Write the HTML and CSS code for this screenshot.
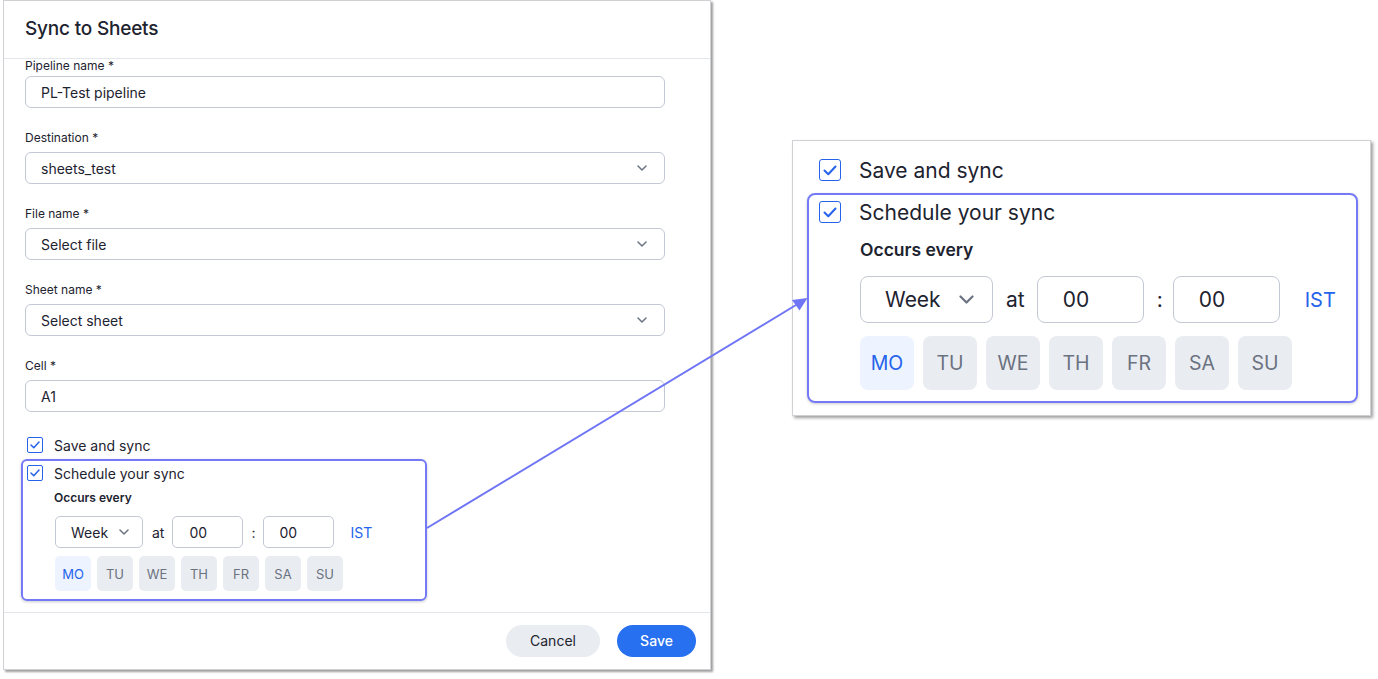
FILE: index.html
```html
<!DOCTYPE html>
<html lang="en">
<head>
<meta charset="utf-8">
<title>Sync to Sheets</title>
<link rel="stylesheet" href="styles.css">
</head>
<body>
<div class="page">
  <div class="dialog">
    <div class="dlg-header"><h1 class="dlg-title">Sync to Sheets</h1></div>
    <div class="dlg-body">
      <div class="fields">
        <div class="field field-first">
          <label class="field-label">Pipeline name *</label>
          <div class="input"><span>PL-Test pipeline</span></div>
        </div>
        <div class="field">
          <label class="field-label">Destination *</label>
          <div class="input select"><span>sheets_test</span><svg class="chev" width="10" height="6" viewBox="0 0 10 6"><path d="M1 1l4 4 4-4" fill="none" stroke="#6b7280" stroke-width="1.5" stroke-linecap="round" stroke-linejoin="round"/></svg></div>
        </div>
        <div class="field">
          <label class="field-label">File name *</label>
          <div class="input select"><span>Select file</span><svg class="chev" width="10" height="6" viewBox="0 0 10 6"><path d="M1 1l4 4 4-4" fill="none" stroke="#6b7280" stroke-width="1.5" stroke-linecap="round" stroke-linejoin="round"/></svg></div>
        </div>
        <div class="field">
          <label class="field-label">Sheet name *</label>
          <div class="input select"><span>Select sheet</span><svg class="chev" width="10" height="6" viewBox="0 0 10 6"><path d="M1 1l4 4 4-4" fill="none" stroke="#6b7280" stroke-width="1.5" stroke-linecap="round" stroke-linejoin="round"/></svg></div>
        </div>
        <div class="field">
          <label class="field-label">Cell *</label>
          <div class="input"><span>A1</span></div>
        </div>
      </div>

      <div class="check-row sm save-row">
        <span class="cbox"><svg width="10" height="8" viewBox="0 0 10 8"><path d="M1 4l2.8 2.8L9 1" fill="none" stroke="#2563eb" stroke-width="1.5" stroke-linecap="round" stroke-linejoin="round"/></svg></span>
        <span class="check-label">Save and sync</span>
      </div>

      <div class="sched sm">
        <div class="check-row">
          <span class="cbox"><svg width="10" height="8" viewBox="0 0 10 8"><path d="M1 4l2.8 2.8L9 1" fill="none" stroke="#2563eb" stroke-width="1.5" stroke-linecap="round" stroke-linejoin="round"/></svg></span>
          <span class="check-label">Schedule your sync</span>
        </div>
        <div class="occurs">Occurs every</div>
        <div class="controls">
          <div class="box week"><span>Week</span><svg class="chev" width="10" height="6" viewBox="0 0 10 6"><path d="M1 1l4 4 4-4" fill="none" stroke="#6b7280" stroke-width="1.5" stroke-linecap="round" stroke-linejoin="round"/></svg></div>
          <span class="at">at</span>
          <div class="box time"><span>00</span></div>
          <span class="colon">:</span>
          <div class="box time"><span>00</span></div>
          <span class="tz">IST</span>
        </div>
        <div class="days">
          <span class="day on">MO</span><span class="day">TU</span><span class="day">WE</span><span class="day">TH</span><span class="day">FR</span><span class="day">SA</span><span class="day">SU</span>
        </div>
      </div>
    </div>
    <div class="dlg-footer">
      <button class="btn btn-cancel">Cancel</button>
      <button class="btn btn-save">Save</button>
    </div>
  </div>

  <div class="zoom-panel">
    <div class="check-row lg save-row-lg">
      <span class="cbox"><svg width="14" height="11" viewBox="0 0 14 11"><path d="M1.5 5.5l3.8 3.8L12.5 1.5" fill="none" stroke="#2563eb" stroke-width="2" stroke-linecap="round" stroke-linejoin="round"/></svg></span>
      <span class="check-label">Save and sync</span>
    </div>
    <div class="sched lg">
      <div class="check-row">
        <span class="cbox"><svg width="14" height="11" viewBox="0 0 14 11"><path d="M1.5 5.5l3.8 3.8L12.5 1.5" fill="none" stroke="#2563eb" stroke-width="2" stroke-linecap="round" stroke-linejoin="round"/></svg></span>
        <span class="check-label">Schedule your sync</span>
      </div>
      <div class="occurs">Occurs every</div>
      <div class="controls">
        <div class="box week"><span>Week</span><svg class="chev" width="15" height="9" viewBox="0 0 15 9"><path d="M1.5 1.5l6 6 6-6" fill="none" stroke="#6b7280" stroke-width="2.2" stroke-linecap="round" stroke-linejoin="round"/></svg></div>
        <span class="at">at</span>
        <div class="box time"><span>00</span></div>
        <span class="colon">:</span>
        <div class="box time"><span>00</span></div>
        <span class="tz">IST</span>
      </div>
      <div class="days">
        <span class="day on">MO</span><span class="day">TU</span><span class="day">WE</span><span class="day">TH</span><span class="day">FR</span><span class="day">SA</span><span class="day">SU</span>
      </div>
    </div>
  </div>

  <svg class="arrow" width="1378" height="679" viewBox="0 0 1378 679">
    <line x1="427" y1="528" x2="796" y2="305" stroke="#6f75f5" stroke-width="2"/>
    <polygon points="807.5,298 799.5,310.5 792,300" fill="#6f75f5"/>
  </svg>
</div>
</body>
</html>
```

FILE: styles.css
```css
* { box-sizing: border-box; }
html, body { margin: 0; padding: 0; background: #fff; }
body {
  font-family: Inter, "Noto Sans", "Liberation Sans", sans-serif;
  color: #1d232f;
  width: 1378px;
  height: 679px;
  overflow: hidden;
}
.page {
  position: relative;
  display: flex;
  align-items: flex-start;
  padding-left: 3px;
  width: 1378px;
  height: 679px;
}

/* dialog */
.dialog {
  width: 708px;
  height: 670px;
  border: 1px solid #cfd1d4;
  background: #fff;
  box-shadow: 2px 2px 2px rgba(0,0,0,0.38);
  display: flex;
  flex-direction: column;
}
.dlg-header {
  height: 58px;
  border-bottom: 1px solid #e3e6ea;
  padding-left: 21px;
  display: flex;
  align-items: center;
  flex: none;
}
.dlg-title {
  margin: 0;
  font-size: 19px;
  font-weight: 500;
  letter-spacing: -0.2px;
  color: #1d232f;
  padding-bottom: 2px;
}
.dlg-body {
  flex: 1;
  overflow: hidden;
  padding: 0 45px 0 21px;
  display: flex;
  flex-direction: column;
}
.fields {
  display: flex;
  flex-direction: column;
  gap: 22px;
}
.field { display: flex; flex-direction: column; }
.field-first .field-label { line-height: 12px; margin-top: 1px; margin-bottom: 4px; }
.field-label {
  font-size: 12px;
  line-height: 16px;
  margin-bottom: 6px;
  color: #1d232f;
}
.input {
  height: 32px;
  border: 1px solid #c3c8d4;
  border-radius: 6px;
  padding: 0 16px 0 15px;
  display: flex;
  align-items: center;
  justify-content: space-between;
  font-size: 14px;
  color: #1d232f;
}
.chev { flex: none; }
.input .chev { margin-right: 1px; }

/* checkboxes */
.check-row { display: flex; align-items: center; }
.cbox {
  flex: none;
  display: flex;
  align-items: center;
  justify-content: center;
  border: 1px solid #2563eb;
  background: #fff;
}
.sm .cbox { width: 16px; height: 16px; border-radius: 2px; }
.sm .check-row, .check-row.sm { height: 20px; }
.sm .check-label { margin-left: 11px; font-size: 14px; }
.save-row { margin-top: 23px; padding-left: 2px; }

/* small schedule box */
.sched {
  border: 2px solid #7479f5;
  box-shadow: 0 1px 3px rgba(0,0,0,0.2);
  display: flex;
  flex-direction: column;
}
.sched.sm {
  margin-top: 4px;
  margin-left: -4px;
  width: 406px;
  border-radius: 6px;
  padding: 2px 0 8px 4px;
}
.sched.sm .occurs {
  margin-top: 7px;
  padding-left: 27px;
  font-size: 12px;
  line-height: 16px;
  font-weight: 600;
}
.controls { display: flex; align-items: center; }
.box {
  border: 1px solid #c3c8d4;
  display: flex;
  align-items: center;
}
.sched.sm .controls { margin-top: 10px; padding-left: 28px; height: 32px; font-size: 14px; }
.sched.sm .box { height: 32px; border-radius: 5px; }
.sched.sm .week { width: 88px; padding-left: 15px; gap: 11px; }
.sched.sm .time { width: 71px; padding-left: 16px; }
.sched.sm .at { margin: 0 8px 0 9px; }
.sched.sm .colon { margin: 0 7px 0 8px; }
.sched.sm .tz { margin-left: 17px; color: #2563eb; }
.days { display: flex; }
.day {
  display: flex;
  align-items: center;
  justify-content: center;
  background: #e9ecf1;
  color: #6b7280;
}
.day.on { background: #eef4ff; color: #2563eb; }
.sched.sm .days { margin-top: 8px; padding-left: 28px; gap: 6px; }
.sched.sm .day { width: 36px; height: 35px; border-radius: 5px; font-size: 13px; }

/* footer */
.dlg-footer {
  flex: none;
  height: 57px;
  border-top: 1px solid #e3e6ea;
  display: flex;
  align-items: center;
  justify-content: flex-end;
  gap: 17px;
  padding-right: 14px;
  padding-bottom: 1px;
}
.btn {
  height: 32px;
  border: none;
  border-radius: 16px;
  font-family: inherit;
  font-size: 14px;
  padding: 0;
}
.btn-cancel { width: 94px; background: #e9ecf1; color: #1d232f; }
.btn-save { width: 79px; background: #2770ef; color: #fff; font-weight: 500; }

/* zoom panel */
.zoom-panel {
  margin-top: 140px;
  margin-left: 81px;
  width: 579px;
  height: 276px;
  border: 1px solid #cfd1d4;
  box-shadow: 2px 2px 3px rgba(0,0,0,0.38);
  background: #fff;
  display: flex;
  flex-direction: column;
  padding-top: 16px;
}
.lg .cbox { width: 22px; height: 22px; border-radius: 3px; border-width: 1.5px; }
.lg .check-row, .check-row.lg { height: 26px; }
.lg .check-label { margin-left: 18px; font-size: 21px; }
.save-row-lg { padding-left: 26px; }
.sched.lg {
  margin-top: 10px;
  margin-left: 14px;
  width: 551px;
  border-radius: 8px;
  padding: 4px 0 11px 10px;
}
.sched.lg .occurs {
  margin-top: 14px;
  padding-left: 41px;
  font-size: 17.5px;
  line-height: 22px;
  font-weight: 600;
}
.sched.lg .controls { margin-top: 15px; padding-left: 41px; height: 47px; font-size: 21px; }
.sched.lg .box { height: 47px; border-radius: 8px; }
.sched.lg .week { width: 133px; padding-left: 24px; gap: 18px; }
.sched.lg .time { width: 107px; padding-left: 25px; }
.sched.lg .at { margin: 0 12px 0 13px; }
.sched.lg .colon { margin: 0 10px 0 13px; }
.sched.lg .tz { margin-left: 25px; color: #2563eb; font-size: 20px; }
.sched.lg .days { margin-top: 13px; padding-left: 41px; gap: 9px; }
.sched.lg .day { width: 54px; height: 54px; border-radius: 8px; font-size: 19.5px; }

/* overlay arrow */
.arrow {
  position: absolute;
  left: 0;
  top: 0;
  pointer-events: none;
}
```
